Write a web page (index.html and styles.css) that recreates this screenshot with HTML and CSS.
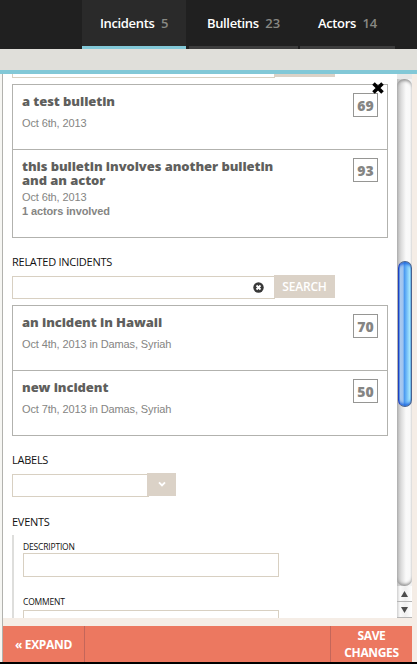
FILE: index.html
```html
<!DOCTYPE html>
<html lang="en">
<head>
<meta charset="utf-8">
<title>Incidents</title>
<link rel="stylesheet" href="styles.css">
</head>
<body>
<nav class="tabs">
  <a class="tab tab-incidents active">Incidents <span class="count">5</span></a>
  <a class="tab tab-bulletins">Bulletins <span class="count">23</span></a>
  <a class="tab tab-actors">Actors <span class="count">14</span></a>
</nav>
<div class="strip"></div>
<main class="panel">
  <div class="body">
    <div class="content">
      <div class="search-row clipped"><div class="field"></div><div class="button"></div></div>
      <ul class="list">
        <li class="item"><div class="info"><h3>a test bulletin</h3><p>Oct 6th, 2013</p></div><span class="score">69</span></li>
        <li class="item tall"><div class="info"><h3>this bulletin involves another bulletin<br>and an actor</h3><p>Oct 6th, 2013</p><p class="strong">1 actors involved</p></div><span class="score">93</span></li>
      </ul>
      <h2 class="related-title">RELATED INCIDENTS</h2>
      <div class="search-row">
        <div class="field">
          <svg class="clear" width="11" height="11" viewBox="0 0 11 11"><circle cx="5.5" cy="5.5" r="5.2" fill="#383838"/><path d="M3.5 3.5l4 4m0-4l-4 4" stroke="#fff" stroke-width="1.8"/></svg>
        </div>
        <div class="button">SEARCH</div>
      </div>
      <ul class="list">
        <li class="item"><div class="info"><h3>an incident in Hawaii</h3><p>Oct 4th, 2013 in Damas, Syriah</p></div><span class="score">70</span></li>
        <li class="item"><div class="info"><h3>new incident</h3><p>Oct 7th, 2013 in Damas, Syriah</p></div><span class="score">50</span></li>
      </ul>
      <h2 class="labels-title">LABELS</h2>
      <div class="search-row labels">
        <div class="field"></div>
        <div class="button"><svg width="8" height="6" viewBox="0 0 8 6"><path d="M1 1.3l3 3 3-3" fill="none" stroke="#fff" stroke-width="1.9"/></svg></div>
      </div>
      <h2 class="events-title">EVENTS</h2>
      <div class="event">
        <label>DESCRIPTION</label>
        <div class="box"></div>
        <label>COMMENT</label>
        <div class="box"></div>
      </div>
    </div>
    <div class="scrollbar">
      <div class="cap"></div>
      <div class="track"><div class="thumb"></div></div>
      <div class="arrow"><svg width="7" height="6" viewBox="0 0 7 6"><path d="M3.5 0L7 6H0z" fill="#4c4c4c"/></svg></div>
      <div class="arrow"><svg width="7" height="6" viewBox="0 0 7 6"><path d="M0 0h7L3.5 6z" fill="#4c4c4c"/></svg></div>
    </div>
    <svg class="close" width="12" height="12" viewBox="0 0 12 12"><path d="M1.5 1.5l9 9m0-9l-9 9" stroke="#000" stroke-width="3.6"/></svg>
  </div>
  <footer class="actions">
    <div class="expand">« EXPAND</div>
    <div class="save">SAVE<br>CHANGES</div>
  </footer>
</main>
</body>
</html>
```
FILE: styles.css
```css
* { box-sizing: border-box; }
body {
  margin: 0;
  width: 417px;
  height: 664px;
  overflow: hidden;
  background: #000;
  font-family: "Open Sans", sans-serif;
}
h2, h3, p, ul { margin: 0; padding: 0; }
ul { list-style: none; }
svg { display: block; flex: none; }

.tabs {
  display: flex;
  height: 49px;
  padding-left: 82px;
  background: #202020;
}
.tab {
  height: 49px;
  border-bottom: 3px solid #3d3d3d;
  color: #fff;
  font-size: 13px;
  font-weight: 600;
  letter-spacing: -0.36px;
  line-height: 46px;
  padding-left: 18px;
  white-space: pre;
}
.tab-incidents { width: 104px; margin-right: 3px; }
.tab-bulletins { width: 109px; margin-right: 2px; }
.tab-actors { width: 95px; }
.tab.active { background: #2a2a2a; border-color: #82c8d7; }
.count { color: #888883; margin-left: 3.5px; letter-spacing: 0; }

.strip { height: 21px; background: #e0dfda; }
.panel {
  height: 592px;
  background: #f5ede6;
  border-top: 4px solid #82c8d7;
  box-shadow: inset 2px 0 #f6f6f3, inset 3px 0 #b2b2ae;
  padding-left: 3px;
}
.body {
  position: relative;
  display: flex;
  width: 409px;
  height: 544px;
}
.content {
  width: 394px;
  height: 544px;
  padding: 0 9px;
  background: #fff;
  overflow: hidden;
}
.search-row { display: flex; height: 24px; margin-bottom: 6px; }
.field {
  display: flex;
  align-items: center;
  justify-content: flex-end;
  width: 263px;
  height: 23px;
  margin-top: 1px;
  margin-right: -1px;
  padding-right: 10px;
  border: 1px solid #d8d0c2;
}
.button {
  display: flex;
  align-items: center;
  justify-content: center;
  width: 61px;
  height: 23px;
  background: #dbd2c7;
  color: #fff;
  font-size: 12px;
  font-weight: 600;
  letter-spacing: -0.2px;
}
.clipped { height: 4px; margin-bottom: 6px; }
.clipped .field { height: 4px; margin-top: 0; border-top: 0; }
.clipped .button { height: 3px; }
.labels { margin-bottom: 0; }
.labels .field { width: 137px; margin-right: -2px; }
.labels .button { width: 29px; padding-bottom: 2px; }

.list { width: 376px; border: 1px solid #b2b2ae; }
.item {
  display: flex;
  justify-content: space-between;
  height: 64px;
  padding: 8px 9px 0;
}
.item + .item { height: 65px; border-top: 1px solid #b2b2ae; }
.item.item.tall { height: 88px; }
.info { padding-top: 1px; }
h3 {
  color: #5f5f5d;
  font-size: 13px;
  font-weight: 800;
  letter-spacing: -0.07px;
  line-height: 14px;
  white-space: nowrap;
}
.info p {
  margin-top: 8px;
  color: #858583;
  font: 11px/14px "Liberation Sans", sans-serif;
  letter-spacing: -0.12px;
}
.tall .info p { margin-top: 3px; }
.tall .info p.strong { margin-top: 0; font-weight: 700; }
.score {
  width: 25px;
  height: 24px;
  border: 1px solid #969694;
  color: #858583;
  font-size: 14px;
  font-weight: 800;
  line-height: 23px;
  text-align: center;
}
h2 {
  height: 16px;
  color: #111;
  font-size: 11px;
  font-weight: 400;
  letter-spacing: -0.26px;
  line-height: 16px;
}
.related-title { margin: 16px 0 5px; }
.labels-title { margin: 16px 0 5px; }
.events-title { margin: 17px 0 5px; }
.event {
  height: 100px;
  padding-left: 9px;
  border-left: 2px solid #dededc;
}
.event label {
  display: block;
  height: 18px;
  padding-top: 6px;
  color: #111;
  font-size: 8.5px;
  letter-spacing: -0.18px;
  line-height: 12px;
}
.box { width: 256px; height: 24px; border: 1px solid #d8d0c2; }
.box + label { height: 20px; margin-top: 13px; }

.scrollbar {
  display: flex;
  flex-direction: column;
  width: 15px;
  background: linear-gradient(90deg, #bdbdbd, #e3e3e3 35%, #fafafa 65%, #f0f0f0);
}
.cap { height: 5px; background: #e8e8e8; }
.track {
  height: 507px;
  padding: 182px 1px 0 1px;
  border-radius: 7px;
  background: linear-gradient(90deg, #b8b8b8, #dedede 30%, #fafafa 60%, #f8f8f8);
  box-shadow: inset 0 3px 3px -1px #999, inset 0 -3px 3px -1px #999;
}
.thumb {
  width: 14px;
  height: 146px;
  border: 1px solid #46618f;
  border-left: 1px solid #1e3fc0;
  border-radius: 7px;
  background: linear-gradient(90deg, #3b78dd, #a9c9ee 12%, #9dc3f0 34%, #4a98ee 44%, #68b5f7 60%, #a4e5fd 88%, #63aee5);
  box-shadow: inset 0 4px 3px -2px #246be0, inset 0 -4px 3px -2px #246be0;
}
.arrow {
  display: flex;
  align-items: center;
  justify-content: center;
  height: 16px;
  border-bottom: 1px solid #b5b5b5;
  background: linear-gradient(90deg, #d0d0d0, #fafafa 20%, #efefef 55%, #fff);
}
.close { position: absolute; left: 369px; top: 8px; }

.actions {
  display: flex;
  justify-content: space-between;
  width: 409px;
  height: 36px;
  margin-top: 8px;
  background: #ec7860;
  color: #fff;
  font-size: 12px;
  font-weight: 700;
  letter-spacing: -0.35px;
  text-align: center;
}
.expand { width: 82px; border-right: 1px solid #c4665a; line-height: 37px; }
.save { width: 82px; border-left: 1px solid #c4665a; line-height: 17px; padding-top: 1px; }
```
